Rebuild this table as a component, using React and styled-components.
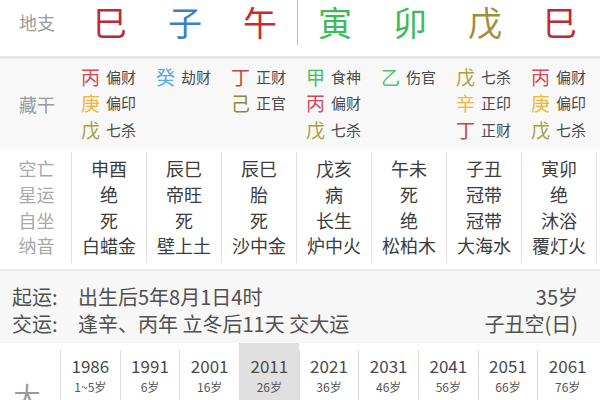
import React from 'react';
import styled, { createGlobalStyle } from 'styled-components';

const GlobalStyle = createGlobalStyle`
  html, body {
    margin: 0;
    padding: 0;
    background: #fff;
  }
  body {
    font-family: "Noto Sans CJK SC", "Noto Sans", sans-serif;
    width: 600px;
    height: 400px;
    overflow: hidden;
  }
`;

const COLORS = {
  fire: '#c0283a',
  fireLight: '#cc2a30',
  water: '#3b7fc9',
  wood: '#3dbb5a',
  earth: '#a58e3a',
};

const branches = [
  { ch: '巳', color: COLORS.fire },
  { ch: '子', color: COLORS.water },
  { ch: '午', color: COLORS.fireLight },
  { ch: '寅', color: COLORS.wood },
  { ch: '卯', color: COLORS.wood },
  { ch: '戊', color: COLORS.earth },
  { ch: '巳', color: COLORS.fire },
];

const stemColor = {
  丙: '#d24a5a',
  丁: '#c8423e',
  庚: '#f2b43c',
  辛: '#f2b43c',
  戊: '#a9a23e',
  己: '#8c8a34',
  癸: '#5aa8e2',
  甲: '#3ec25e',
  乙: '#52c472',
};

const hidden = [
  [['丙', '偏财'], ['庚', '偏印'], ['戊', '七杀']],
  [['癸', '劫财']],
  [['丁', '正财'], ['己', '正官']],
  [['甲', '食神'], ['丙', '偏财'], ['戊', '七杀']],
  [['乙', '伤官']],
  [['戊', '七杀'], ['辛', '正印'], ['丁', '正财']],
  [['丙', '偏财'], ['庚', '偏印'], ['戊', '七杀']],
];

const details = [
  ['申酉', '绝', '死', '白蜡金'],
  ['辰巳', '帝旺', '死', '壁上土'],
  ['辰巳', '胎', '死', '沙中金'],
  ['戊亥', '病', '长生', '炉中火'],
  ['午未', '死', '绝', '松柏木'],
  ['子丑', '冠带', '冠带', '大海水'],
  ['寅卯', '绝', '沐浴', '覆灯火'],
];

const luck = [
  ['1986', '1~5岁'],
  ['1991', '6岁'],
  ['2001', '16岁'],
  ['2011', '26岁'],
  ['2021', '36岁'],
  ['2031', '46岁'],
  ['2041', '56岁'],
  ['2051', '66岁'],
  ['2061', '76岁'],
];

export default function App() {
  return (
    <>
      <GlobalStyle />
      <Page>
        <BranchRow>
          <Label>地支</Label>
          {branches.map((b, i) => (
            <Branch key={i} color={b.color} divided={i === 3}>
              {b.ch}
            </Branch>
          ))}
        </BranchRow>

        <HiddenRow>
          <Label>藏干</Label>
          {hidden.map((col, i) => (
            <HiddenCol key={i}>
              {col.map(([stem, god], j) => (
                <HiddenItem key={j}>
                  <Stem color={stemColor[stem]}>{stem}</Stem>
                  <God>{god}</God>
                </HiddenItem>
              ))}
            </HiddenCol>
          ))}
        </HiddenRow>

        <DetailRow>
          <DetailLabels>
            <span>空亡</span>
            <span>星运</span>
            <span>自坐</span>
            <span>纳音</span>
          </DetailLabels>
          {details.map((col, i) => (
            <DetailCol key={i}>
              {col.map((t, j) => (
                <span key={j}>{t}</span>
              ))}
            </DetailCol>
          ))}
        </DetailRow>

        <InfoRow>
          <InfoLine>
            <InfoKey>起运:</InfoKey>
            <InfoText>出生后5年8月1日4时</InfoText>
            <InfoRight>35岁</InfoRight>
          </InfoLine>
          <InfoLine>
            <InfoKey>交运:</InfoKey>
            <InfoText>逢辛、丙年 立冬后11天 交大运</InfoText>
            <InfoRight>子丑空(日)</InfoRight>
          </InfoLine>
        </InfoRow>

        <LuckRow>
          <LuckLabel>大</LuckLabel>
          <LuckCells>
            {luck.map(([year, age], i) => (
              <LuckCell key={i} active={year === '2011'}>
                <Year>{year}</Year>
                <Age>{age}</Age>
              </LuckCell>
            ))}
          </LuckCells>
        </LuckRow>
      </Page>
    </>
  );
}

const Page = styled.div`
  width: 600px;
  height: 400px;
  overflow: hidden;
  background: #fff;
`;

const Label = styled.div`
  width: 72px;
  flex: none;
  text-align: center;
  color: #9a9a9a;
  font-size: 18px;
  padding-left: 2px;
  box-sizing: border-box;
`;

const BranchRow = styled.div`
  display: flex;
  align-items: center;
  height: 58px;
  border-bottom: 2px solid #e6e6e6;
  box-sizing: border-box;
  padding-bottom: 12px;
`;

const Branch = styled.div`
  width: 75px;
  flex: none;
  text-align: center;
  font-size: 34px;
  line-height: 46px;
  color: ${p => p.color};
  border-left: ${p => (p.divided ? '1px solid #bdbdbd' : '1px solid transparent')};
  box-sizing: border-box;
`;

const HiddenRow = styled.div`
  display: flex;
  align-items: center;
  height: 90px;
  background: #f8f8f8;
  border-top: 1px solid #ececec;
`;

const HiddenCol = styled.div`
  width: 75px;
  flex: none;
  align-self: flex-start;
  padding: 4px 0 0 9px;
  box-sizing: border-box;
  display: flex;
  flex-direction: column;
`;

const HiddenItem = styled.div`
  display: flex;
  align-items: center;
  gap: 6px;
  height: 26.5px;
  white-space: nowrap;
`;

const Stem = styled.span`
  font-size: 19px;
  color: ${p => p.color};
`;

const God = styled.span`
  font-size: 15px;
  color: #4a4a4a;
`;

const DetailRow = styled.div`
  display: flex;
  height: 121px;
  padding: 3px 0 6px;
  box-sizing: border-box;
  border-bottom: 1px solid #e8e8e8;
`;

const DetailLabels = styled.div`
  width: 72px;
  flex: none;
  display: flex;
  flex-direction: column;
  align-items: center;
  justify-content: center;
  color: #a8a8a8;
  font-size: 18px;
  line-height: 25.7px;
  border-right: 1px solid #e0e0e0;
  padding-left: 2px;
  box-sizing: border-box;
`;

const DetailCol = styled.div`
  width: 75px;
  flex: none;
  display: flex;
  flex-direction: column;
  align-items: center;
  justify-content: center;
  color: #3c3c3c;
  font-size: 18px;
  line-height: 25.7px;
  border-right: 1px solid #e0e0e0;
  box-sizing: border-box;
  white-space: nowrap;
`;

const InfoRow = styled.div`
  background: #f7f7f7;
  border-top: 1px solid #ececec;
  height: 73px;
  padding: 12px 22px 0 12px;
  box-sizing: border-box;
`;

const InfoLine = styled.div`
  display: flex;
  align-items: center;
  height: 27px;
  font-size: 20px;
  color: #505050;
  white-space: nowrap;
`;

const InfoKey = styled.span`
  width: 66px;
  flex: none;
`;

const InfoText = styled.span`
  flex: 1;
`;

const InfoRight = styled.span`
  text-align: right;
`;

const LuckRow = styled.div`
  display: flex;
  height: 60px;
`;

const LuckLabel = styled.div`
  width: 60px;
  flex: none;
  display: flex;
  align-items: flex-end;
  justify-content: center;
  font-size: 27px;
  color: #9a9a9a;
  padding-right: 6px;
  box-sizing: border-box;
  line-height: 1;
  margin-bottom: -6px;
`;

const LuckCells = styled.div`
  flex: 1;
  display: grid;
  grid-template-columns: repeat(9, 1fr);
  padding-right: 3px;
`;

const LuckCell = styled.div`
  display: flex;
  flex-direction: column;
  align-items: center;
  margin-top: ${p => (p.active ? '0' : '7px')};
  padding-top: ${p => (p.active ? '10px' : '3px')};
  background: ${p => (p.active ? '#e0e0e0' : 'transparent')};
  border-left: 1px solid #dcdcdc;
`;

const Year = styled.span`
  font-size: 17px;
  line-height: 25px;
  color: #4a4a4a;
`;

const Age = styled.span`
  font-size: 12px;
  line-height: 17px;
  color: #555;
`;
